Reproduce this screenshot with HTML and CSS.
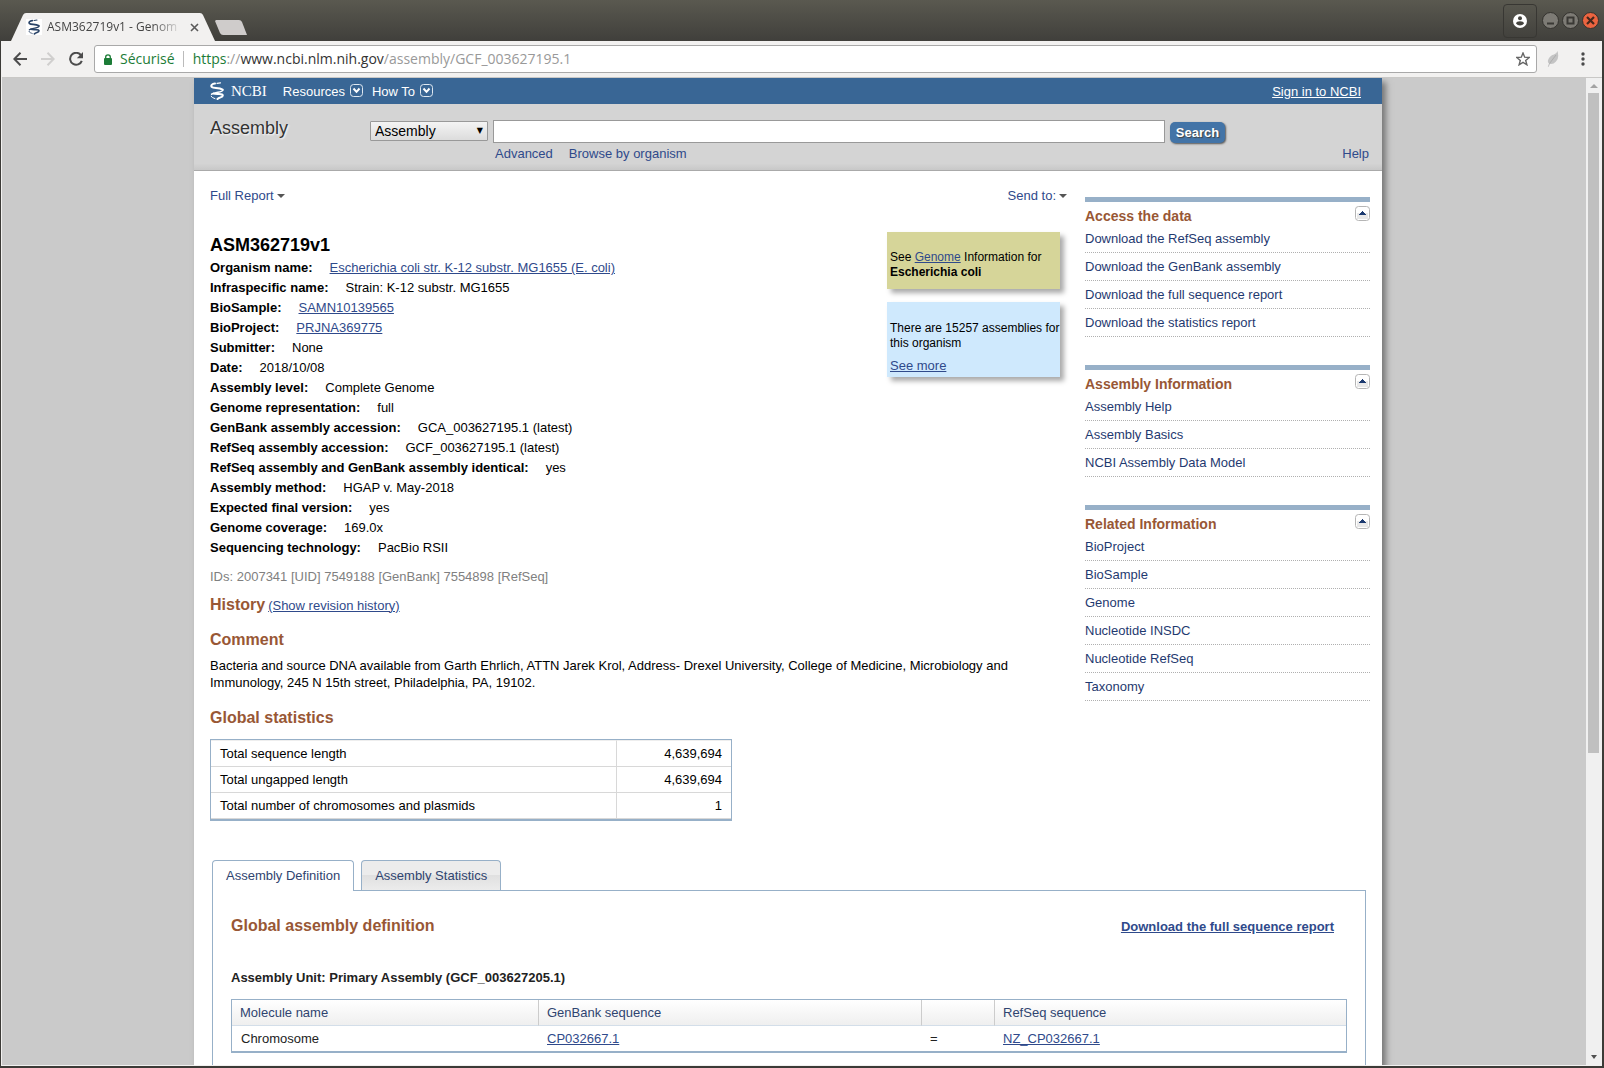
FILE: index.html
```html
<!DOCTYPE html>
<html lang="en">
<head>
<meta charset="utf-8">
<title>ASM362719v1 - Genome - Assembly - NCBI</title>
<link rel="stylesheet" href="styles.css">
</head>
<body>
<svg class="defs" aria-hidden="true">
  <symbol id="helix" viewBox="0 0 14 18">
    <g fill="none" stroke="currentColor" stroke-linecap="round">
      <path d="M5 1.600C2 1.800 .4 3.800 1.800 5C3.600 6.600 9 5.200 12.600 7.600" stroke-width="2"/>
      <path d="M7 1.300L10.500 .9" stroke-width="1.200"/>
      <path d="M12.900 8C12.600 10.800 5 9.600 1.600 12.200" stroke-width="1.500"/>
      <path d="M3.500 11.600C7 12.800 12.600 10.800 12.800 13.400C12.900 15.600 9.500 15 7.500 17" stroke-width="2"/>
      <path d="M1.200 14.200C1.600 15.800 3.500 15.800 5 16.600" stroke-width="1"/>
    </g>
  </symbol>
  <symbol id="drop" viewBox="0 0 13 13">
    <rect x=".5" y=".5" width="12" height="12" rx="3" fill="none" stroke="#dfe8f1"/>
    <path d="M3.500 4.500L6.500 7.800L9.500 4.500" fill="none" stroke="#fff" stroke-width="2"/>
  </symbol>
  <symbol id="caret" viewBox="0 0 8 4"><path d="M0 0H8L4 4Z" fill="#555"/></symbol>
  <symbol id="fold" viewBox="0 0 15 15">
    <rect x=".5" y=".5" width="14" height="14" rx="3" fill="#fff" stroke="#b5b5b5"/>
    <rect x="2" y="7" width="11" height="6" fill="#e8e8e8"/>
    <path d="M7 5H8V6H9V7H10V8H11V9H4V8H5V7H6V6H7Z" fill="#1c3a70"/>
  </symbol>
</svg>

<header class="titlebar">
  <div class="tab">
    <svg class="tab-shape" viewBox="0 0 204 28" preserveAspectRatio="none"><path d="M0 28L12 2Q13 0 15 0H189Q191 0 192 2L204 28Z" fill="#f2f1f0"/></svg>
    <span class="favicon"><svg width="12" height="16"><use href="#helix"/></svg></span>
    <span class="tab-title">ASM362719v1 - Genom</span>
    <button class="bare tab-close" aria-label="Close tab"><svg width="9" height="9"><path d="M1 1L8 8M8 1L1 8" stroke="#5a5a5a" stroke-width="1.600"/></svg></button>
  </div>
  <button class="bare new-tab" aria-label="New tab"><svg width="32" height="15"><path d="M1 0H24Q26 0 27 2L32 15H8Q6 15 5 13L0 1Z" fill="#cfcccb"/></svg></button>
  <div class="window-tools">
    <button class="bare profile" aria-label="Profile"><svg width="14" height="14"><circle cx="7" cy="7" r="7" fill="#fff"/><circle cx="7" cy="4.200" r="2" fill="#44433e"/><path d="M3 9.500Q3.500 7.300 7 7.300T11 9.500Q9.500 11.600 7 11.600T3 9.500Z" fill="#44433e"/></svg></button>
    <button class="bare" aria-label="Minimise"><svg width="17" height="17"><circle cx="8.500" cy="8.500" r="8" fill="#7d7b75" stroke="#34332f"/><path d="M5 11.500H12" stroke="#3a3935" stroke-width="2"/></svg></button>
    <button class="bare" aria-label="Maximise"><svg width="17" height="17"><circle cx="8.500" cy="8.500" r="8" fill="#7d7b75" stroke="#34332f"/><rect x="5.500" y="5.500" width="6" height="6" fill="none" stroke="#3a3935" stroke-width="2"/></svg></button>
    <button class="bare" aria-label="Close"><svg width="17" height="17"><circle cx="8.500" cy="8.500" r="8" fill="#ec6440" stroke="#34332f"/><path d="M5 5L12 12M12 5L5 12" stroke="#46281c" stroke-width="2.200"/></svg></button>
  </div>
</header>

<div class="window">
  <nav class="toolbar" aria-label="Browser">
    <button class="bare" aria-label="Back"><svg width="14" height="14"><path d="M14 7H1.500M7.500 .8L1.300 7L7.500 13.200" fill="none" stroke="#4c4c4c" stroke-width="2"/></svg></button>
    <button class="bare" aria-label="Forward"><svg width="14" height="14"><path d="M0 7H12.500M6.500 .8L12.700 7L6.500 13.200" fill="none" stroke="#d0cfce" stroke-width="2"/></svg></button>
    <button class="bare" aria-label="Reload"><svg width="14" height="14"><path d="M11.800 3A6 6 0 1 0 12.800 8.800" fill="none" stroke="#4c4c4c" stroke-width="2"/><path d="M14 0V6.200H7.800Z" fill="#4c4c4c"/></svg></button>
    <div class="omnibox">
      <svg width="8" height="11"><rect y="4" width="8" height="7" rx="1" fill="#1c7c37"/><path d="M1.700 5V3Q1.700 .8 4 .8T6.300 3V5" fill="none" stroke="#1c7c37" stroke-width="1.300"/></svg>
      <span class="secure">Sécurisé</span>
      <div class="url" role="textbox" aria-label="Address" contenteditable="true" spellcheck="false"><span class="scheme">https</span><span class="dim">://</span>www.ncbi.nlm.nih.gov<span class="dim">/assembly/GCF_003627195.1</span></div>
      <button class="bare" aria-label="Bookmark"><svg width="14" height="14"><path d="M7 1L8.700 5.200L13.200 5.500L9.700 8.400L10.900 12.800L7 10.400L3.100 12.800L4.300 8.400L.8 5.500L5.300 5.200Z" fill="none" stroke="#666" stroke-width="1.400"/></svg></button>
    </div>
    <button class="bare" aria-label="Extension"><svg width="12" height="16"><path d="M10.500 0Q12.500 7 9 10.500Q6.500 13.500 3 13L1.500 16L.8 15.500L2 12.500Q0 11 1.500 8Q3.500 4 7 3.500Q9.500 3 10.500 0Z" fill="#c4c4c4"/><path d="M2.500 12.500L9 4" stroke="#adadad"/></svg></button>
    <button class="bare menu" aria-label="Menu"><svg width="4" height="14"><circle cx="2" cy="2" r="1.700" fill="#4a4a4a"/><circle cx="2" cy="7" r="1.700" fill="#4a4a4a"/><circle cx="2" cy="12" r="1.700" fill="#4a4a4a"/></svg></button>
  </nav>

  <div class="viewport">
    <div class="canvas">
      <div class="page">
        <div class="topbar">
          <a href="#" class="logo"><svg width="14" height="18"><use href="#helix"/></svg>NCBI</a>
          <button class="bare top-menu">Resources<svg width="13" height="13"><use href="#drop"/></svg></button>
          <button class="bare top-menu">How To<svg width="13" height="13"><use href="#drop"/></svg></button>
          <a href="#" class="signin">Sign in to NCBI</a>
        </div>

        <form class="search">
          <p class="db-name">Assembly</p>
          <div class="search-fields">
            <span class="select-wrap"><select aria-label="Database"><option>Assembly</option></select></span>
            <input class="term" type="text" aria-label="Search term">
            <button class="go" type="button">Search</button>
          </div>
          <div class="search-links"><a href="#">Advanced</a><a href="#">Browse by organism</a><a href="#" class="help">Help</a></div>
        </form>

        <div class="columns">
          <main>
            <div class="display-bar">
              <a href="#">Full Report<svg width="8" height="4"><use href="#caret"/></svg></a>
              <a href="#">Send to:<svg width="8" height="4"><use href="#caret"/></svg></a>
            </div>
            <div class="overview">
              <section class="facts">
                <h1>ASM362719v1</h1>
                <dl>
                  <div><dt>Organism name:</dt><dd><a href="#">Escherichia coli str. K-12 substr. MG1655 (E. coli)</a></dd></div>
                  <div><dt>Infraspecific name:</dt><dd>Strain: K-12 substr. MG1655</dd></div>
                  <div><dt>BioSample:</dt><dd><a href="#">SAMN10139565</a></dd></div>
                  <div><dt>BioProject:</dt><dd><a href="#">PRJNA369775</a></dd></div>
                  <div><dt>Submitter:</dt><dd>None</dd></div>
                  <div><dt>Date:</dt><dd>2018/10/08</dd></div>
                  <div><dt>Assembly level:</dt><dd>Complete Genome</dd></div>
                  <div><dt>Genome representation:</dt><dd>full</dd></div>
                  <div><dt>GenBank assembly accession:</dt><dd>GCA_003627195.1 (latest)</dd></div>
                  <div><dt>RefSeq assembly accession:</dt><dd>GCF_003627195.1 (latest)</dd></div>
                  <div><dt>RefSeq assembly and GenBank assembly identical:</dt><dd>yes</dd></div>
                  <div><dt>Assembly method:</dt><dd>HGAP v. May-2018</dd></div>
                  <div><dt>Expected final version:</dt><dd>yes</dd></div>
                  <div><dt>Genome coverage:</dt><dd>169.0x</dd></div>
                  <div><dt>Sequencing technology:</dt><dd>PacBio RSII</dd></div>
                </dl>
              </section>
              <aside class="notes">
                <div class="note note-genome"><p>See <a href="#">Genome</a> Information for <b>Escherichia coli</b></p></div>
                <div class="note note-count"><p>There are 15257 assemblies for this organism</p><a href="#">See more</a></div>
              </aside>
            </div>
            <p class="ids">IDs: 2007341 [UID] 7549188 [GenBank] 7554898 [RefSeq]</p>
            <div class="history"><h2>History</h2><a href="#">(Show revision history)</a></div>
            <h2 class="comment-title">Comment</h2>
            <p class="comment">Bacteria and source DNA available from Garth Ehrlich, ATTN Jarek Krol, Address- Drexel University, College of Medicine, Microbiology and Immunology, 245 N 15th street, Philadelphia, PA, 19102.</p>
            <h2 class="stats-title">Global statistics</h2>
            <table class="stats">
              <tr><td>Total sequence length</td><td>4,639,694</td></tr>
              <tr><td>Total ungapped length</td><td>4,639,694</td></tr>
              <tr><td>Total number of chromosomes and plasmids</td><td>1</td></tr>
            </table>
          </main>

          <aside class="sidebar">
            <section>
              <h3>Access the data<button class="bare" aria-label="Collapse"><svg width="15" height="15"><use href="#fold"/></svg></button></h3>
              <ul>
                <li><a href="#">Download the RefSeq assembly</a></li>
                <li><a href="#">Download the GenBank assembly</a></li>
                <li><a href="#">Download the full sequence report</a></li>
                <li><a href="#">Download the statistics report</a></li>
              </ul>
            </section>
            <section>
              <h3>Assembly Information<button class="bare" aria-label="Collapse"><svg width="15" height="15"><use href="#fold"/></svg></button></h3>
              <ul>
                <li><a href="#">Assembly Help</a></li>
                <li><a href="#">Assembly Basics</a></li>
                <li><a href="#">NCBI Assembly Data Model</a></li>
              </ul>
            </section>
            <section>
              <h3>Related Information<button class="bare" aria-label="Collapse"><svg width="15" height="15"><use href="#fold"/></svg></button></h3>
              <ul>
                <li><a href="#">BioProject</a></li>
                <li><a href="#">BioSample</a></li>
                <li><a href="#">Genome</a></li>
                <li><a href="#">Nucleotide INSDC</a></li>
                <li><a href="#">Nucleotide RefSeq</a></li>
                <li><a href="#">Taxonomy</a></li>
              </ul>
            </section>
          </aside>
        </div>

        <section class="details">
          <div class="tabs" role="tablist">
            <button role="tab" aria-selected="true">Assembly Definition</button>
            <button role="tab" aria-selected="false">Assembly Statistics</button>
          </div>
          <div class="panel" role="tabpanel">
            <div class="panel-head"><h2>Global assembly definition</h2><a href="#">Download the full sequence report</a></div>
            <h4>Assembly Unit: Primary Assembly (GCF_003627205.1)</h4>
            <table class="units">
              <colgroup><col class="col-name"><col class="col-genbank"><col class="col-eq"><col></colgroup>
              <thead><tr><th>Molecule name</th><th>GenBank sequence</th><th></th><th>RefSeq sequence</th></tr></thead>
              <tbody><tr><td>Chromosome</td><td><a href="#">CP032667.1</a></td><td>=</td><td><a href="#">NZ_CP032667.1</a></td></tr></tbody>
            </table>
          </div>
        </section>
      </div>
    </div>
    <div class="scrollbar" aria-hidden="true">
      <svg width="16" height="15"><path d="M4 10H12L8 6Z" fill="#a3a3a3"/></svg>
      <div class="track"><div class="thumb"></div></div>
      <svg width="16" height="15"><path d="M5 5H11L8 9Z" fill="#505050"/></svg>
    </div>
  </div>
</div>
</body>
</html>
```
FILE: styles.css
```css
* { box-sizing: border-box; }

body {
  margin: 0;
  height: 100vh;
  display: flex;
  flex-direction: column;
  overflow: hidden;
  background: #3c3b37;
  color: #000;
  font: 13px/15px "Liberation Sans", Arial, sans-serif;
}

h1, h2, h3, h4, p, dl, dd, ul { margin: 0; padding: 0; }
ul { list-style: none; }
a { color: #2f4a8b; }
svg { display: block; flex: none; }
.defs { position: absolute; width: 0; height: 0; }

.bare {
  display: flex;
  align-items: center;
  justify-content: center;
  flex: none;
  margin: 0;
  padding: 0;
  border: 0;
  background: none;
  color: inherit;
  font: inherit;
}

/* Browser frame */
.titlebar {
  display: flex;
  align-items: flex-end;
  flex: none;
  height: 41px;
  padding: 0 5px 0 11px;
  background: linear-gradient(#5a5950, #403f3b);
}
.tab {
  position: relative;
  display: flex;
  align-items: center;
  width: 204px;
  height: 28px;
  padding: 0 16px 0 15px;
}
.tab-shape { position: absolute; inset: 0; width: 100%; height: 100%; }
.favicon {
  position: relative;
  display: flex;
  justify-content: center;
  width: 16px;
  background: #fff;
  color: #2a4468;
}
.tab-title {
  position: relative;
  flex: 1;
  margin: 0 8px 0 5px;
  white-space: nowrap;
  color: #444;
  font: 12px/18px "Open Sans", "Noto Sans", sans-serif;
  -webkit-mask-image: linear-gradient(90deg, #000 78%, transparent);
  mask-image: linear-gradient(90deg, #000 78%, transparent);
}
.tab-close { position: relative; }
.new-tab { margin-bottom: 6px; }
.window-tools {
  display: flex;
  align-items: center;
  gap: 3px;
  height: 41px;
  margin-left: auto;
}
.profile {
  width: 34px;
  height: 34px;
  margin-right: 2px;
  border: 1px solid #383733;
  border-radius: 4px;
}
.window {
  display: flex;
  flex: 1;
  flex-direction: column;
  min-height: 0;
  margin: 0 2px 2px 1px;
  padding: 0 0 1px 1px;
  background: #f2f1f0;
}
.toolbar {
  display: flex;
  align-items: center;
  flex: none;
  gap: 14px;
  height: 37px;
  padding: 0 17px 0 11px;
  border-bottom: 1px solid #c9c8c6;
}
.omnibox {
  display: flex;
  align-items: center;
  flex: 1;
  height: 28px;
  margin: 0 -4px 0 -3px;
  padding: 0 6px 0 9px;
  border: 1px solid #a9a9a9;
  border-radius: 3px;
  background: #fff;
  font: 14px/20px "Open Sans", "Noto Sans", sans-serif;
}
.secure {
  margin: 0 9px 0 8px;
  padding-right: 8px;
  border-right: 1px solid #bbb;
  color: #1c7c37;
  line-height: 16px;
}
.url { flex: 1; color: #333; outline: 0; white-space: nowrap; }
.scheme { color: #1c7c37; }
.dim { color: #999; }
.menu { margin-left: 8px; }

.viewport { display: flex; flex: 1; min-height: 0; background: #cacaca; }
.canvas { flex: 1; overflow: hidden; padding: 0 12px 0 0; }
.scrollbar {
  display: flex;
  flex: none;
  flex-direction: column;
  width: 16px;
  background: #f0f0f0;
}
.track { flex: 1; padding: 0 3px 0 2px; }
.thumb { height: 69%; background: #c0c0c0; }

/* NCBI page */
.page {
  max-width: 1188px;
  min-height: 100%;
  margin: 0 auto;
  background: #fff;
  box-shadow: 4px 4px 6px #777;
}
.topbar {
  display: flex;
  align-items: center;
  height: 26px;
  padding: 0 21px 0 16px;
  background: #396695;
  color: #fff;
}
.topbar a { color: #fff; }
.logo {
  display: flex;
  align-items: center;
  gap: 7px;
  margin-right: 16px;
  text-decoration: none;
  font: 15px/18px "Liberation Serif", serif;
}
.top-menu { align-items: flex-start; gap: 5px; margin-right: 9px; }
.signin { margin-left: auto; }

.search {
  display: grid;
  grid-template-columns: 160px 1fr;
  align-content: start;
  height: 67px;
  padding: 16px 13px 0 16px;
  border-bottom: 1px solid #aaa;
  background: linear-gradient(#d4d4d4 90%, #c8c8c8);
}
.search a { color: #2f4a8b; text-decoration: none; }
.db-name {
  color: #333;
  font-size: 18px;
  line-height: 16px;
  text-shadow: 1px 1px 2px #fff;
}
.search-fields { display: flex; align-items: flex-start; gap: 5px; padding-right: 144px; }
.select-wrap { position: relative; display: flex; margin-top: 1px; }
.select-wrap::after {
  content: "▼";
  position: absolute;
  right: 5px;
  top: 4px;
  font: 8px/12px "DejaVu Sans", sans-serif;
  pointer-events: none;
}
.select-wrap select {
  width: 118px;
  height: 20px;
  padding: 0 4px;
  border: 1px solid #999;
  border-radius: 1px;
  background: linear-gradient(#f4f4f4, #dcdcdc);
  color: #000;
  appearance: none;
  font: 14px/18px "Liberation Sans", Arial, sans-serif;
}
.term { flex: 1; min-width: 0; height: 23px; border: 1px solid #999; background: #fff; }
.go {
  width: 55px;
  height: 21px;
  margin-top: 2px;
  padding: 0;
  border: 0;
  border-radius: 5px;
  background: #4374a7;
  box-shadow: 1px 1px 2px #555;
  color: #fff;
  font: bold 13px/20px "Liberation Sans", Arial, sans-serif;
  text-shadow: 1px 1px 1px #444;
}
.search-links { display: flex; grid-column: 2; gap: 16px; padding: 3px 0 0 125px; }
.help { margin-left: auto; }

.columns {
  display: grid;
  grid-template-columns: minmax(0, 1fr) 285px;
  gap: 18px;
  padding: 17px 12px 0 16px;
}
.display-bar { display: flex; justify-content: space-between; }
.display-bar a { display: flex; align-items: center; gap: 3px; text-decoration: none; }
.overview { display: flex; justify-content: space-between; }
h1 { margin-top: 30px; font-size: 18px; line-height: 25px; }
.facts dl { line-height: 20px; }
.facts dl div { display: flex; gap: 17px; }
dt { font-weight: bold; }
.notes { display: flex; flex-direction: column; gap: 13px; width: 173px; margin: 29px 7px 0 0; }
.note {
  padding: 18px 0 9px 3px;
  box-shadow: 4px 4px 5px #aaa;
  font-size: 12px;
  line-height: 15px;
}
.note-genome { background: #d6d599; }
.note-count { padding: 19px 0 3px 3px; background: #cfe9fd; }
.note-count a { display: inline-block; margin-top: 7px; font-size: 13px; }

.ids { margin-top: 9px; color: #808080; line-height: 20px; }
h2 { color: #985735; font-size: 16px; line-height: 20px; }
.history { display: flex; align-items: center; gap: 3px; margin-top: 8px; }
.comment-title { margin-top: 15px; }
.comment { margin-top: 7px; line-height: 17px; }
.stats-title { margin-top: 17px; }

.stats, .units {
  border: 1px solid #97b0c8;
  border-bottom-width: 2px;
  border-spacing: 0;
}
.stats { width: 522px; margin-top: 11px; }
.stats td { height: 26px; padding: 0 9px; border-top: 1px solid #d8d8d8; }
.stats tr:first-child td { border-top-color: #eee; }
.stats tr:last-child td { height: 27px; border-bottom: 1px solid #d8d8d8; }
.stats td + td { width: 115px; border-left: 1px solid #d8d8d8; text-align: right; }

.sidebar section { margin-bottom: 28px; border-top: 5px solid #97b0c8; }
.sidebar { padding-top: 9px; }
h3 {
  display: flex;
  justify-content: space-between;
  align-items: flex-start;
  height: 23px;
  padding-top: 4px;
  color: #985735;
  font-size: 14px;
  line-height: 20px;
}
.sidebar li { padding: 6px 0; border-bottom: 1px dotted #b0b0b0; }
.sidebar a { color: #1f3a70; text-decoration: none; }

.details { padding: 39px 16px 0 18px; }
.tabs { display: flex; gap: 7px; }
.tabs button {
  height: 30px;
  padding: 0 13px;
  border: 1px solid #97b0c8;
  border-bottom: 0;
  border-radius: 4px 4px 0 0;
  background: linear-gradient(#ececec 50%, #e0e0e0 50%, #ececec);
  color: #2f4470;
  font: 13px/15px "Liberation Sans", Arial, sans-serif;
}
.tabs button[aria-selected="true"] {
  z-index: 1;
  height: 31px;
  margin-bottom: -1px;
  padding-bottom: 1px;
  background: #fff;
}
.panel { padding: 25px 18px 40px; border: 1px solid #97b0c8; }
.panel-head { display: flex; justify-content: space-between; align-items: center; padding-right: 13px; }
.panel-head a { font-weight: bold; }
h4 { margin-top: 34px; color: #222; font-size: 13px; }
.units { width: 100%; margin-top: 14px; table-layout: fixed; }
.units th {
  height: 26px;
  padding: 0 8px;
  border-bottom: 1px solid #d3dee9;
  background: linear-gradient(#fff, #efefef);
  color: #2f4470;
  font-weight: normal;
  text-align: left;
}
.units th + th { border-left: 1px solid #ccc; }
.units td { height: 25px; padding: 0 9px; color: #222; }
.col-name { width: 306px; }
.col-genbank { width: 383px; }
.col-eq { width: 73px; }
```
